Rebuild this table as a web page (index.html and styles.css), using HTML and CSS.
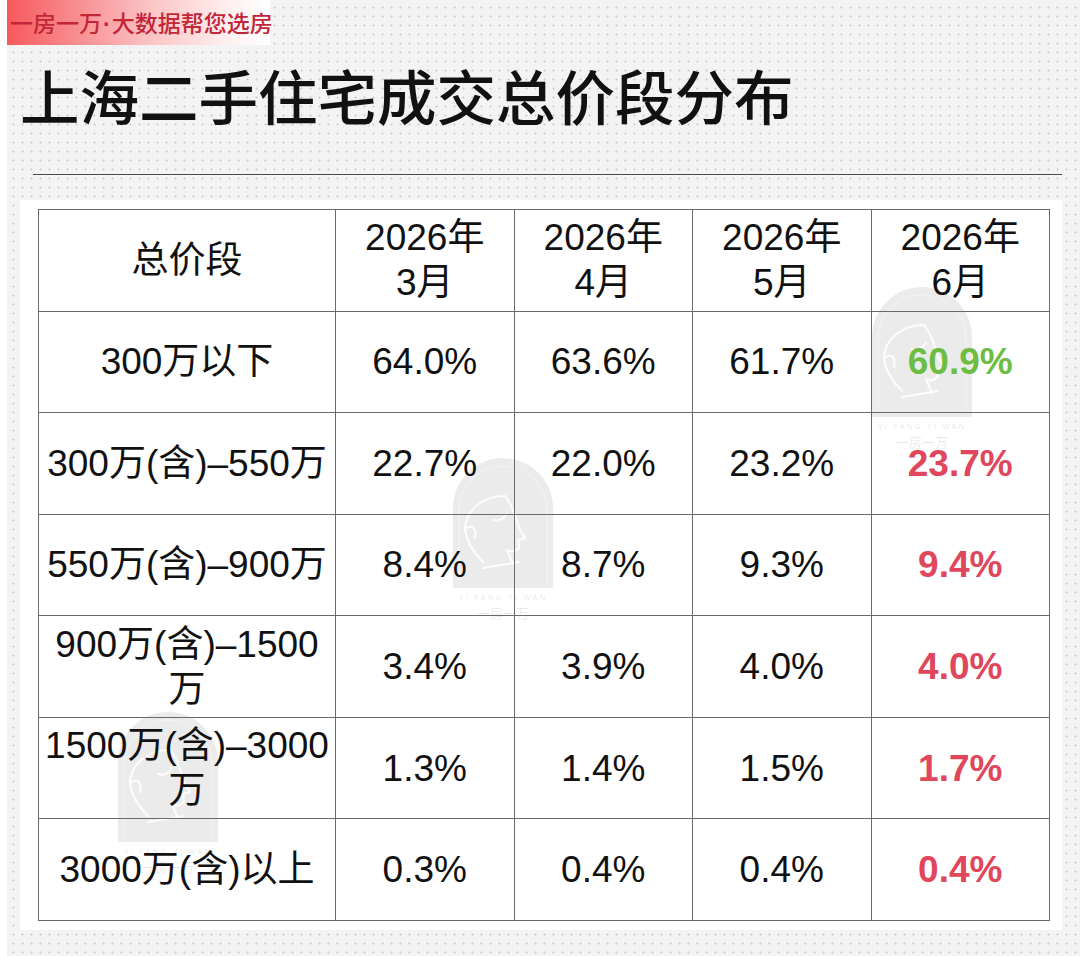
FILE: index.html
```html
<!DOCTYPE html>
<html lang="zh-CN">
<head>
<meta charset="utf-8">
<title>上海二手住宅成交总价段分布</title>
<link rel="stylesheet" href="styles.css">
</head>
<body>
<div class="page">
  <div class="badge">一房一万<span class="dot">·</span>大数据帮您选房</div>
  <h1 class="title">上海二手住宅成交总价段分布</h1>
  <div class="rule"></div>
  <div class="panel">
    <div class="wm wm1">
      <svg width="100" height="165" viewBox="0 0 100 165">
        <path class="arch" d="M0,130 V50 A50,50 0 0 1 100,50 V130 Z"/>
        <path class="inner" d="M6,126 V52 A44,44 0 0 1 94,52 V126"/>
        <path class="face" d="M12,72 C12,52 30,38 52,38 C58,44 62,56 66,70 L72,80 L65,82 L66,90 C62,94 58,94 54,92 L60,106 M12,72 C14,86 22,96 30,104 M14,70 C20,66 24,72 22,80 M30,110 L66,104 M54,56 C50,62 46,64 40,62"/>
        <text class="en" x="50" y="142">YI FANG YI WAN</text>
        <text class="cn" x="50" y="160">一房一万</text>
      </svg>
    </div>
    <div class="wm wm2">
      <svg width="100" height="165" viewBox="0 0 100 165">
        <path class="arch" d="M0,130 V50 A50,50 0 0 1 100,50 V130 Z"/>
        <path class="inner" d="M6,126 V52 A44,44 0 0 1 94,52 V126"/>
        <path class="face" d="M12,72 C12,52 30,38 52,38 C58,44 62,56 66,70 L72,80 L65,82 L66,90 C62,94 58,94 54,92 L60,106 M12,72 C14,86 22,96 30,104 M14,70 C20,66 24,72 22,80 M30,110 L66,104 M54,56 C50,62 46,64 40,62"/>
        <text class="en" x="50" y="142">YI FANG YI WAN</text>
        <text class="cn" x="50" y="160">一房一万</text>
      </svg>
    </div>
    <div class="wm wm3">
      <svg width="100" height="165" viewBox="0 0 100 165">
        <path class="arch" d="M0,130 V50 A50,50 0 0 1 100,50 V130 Z"/>
        <path class="inner" d="M6,126 V52 A44,44 0 0 1 94,52 V126"/>
        <path class="face" d="M12,72 C12,52 30,38 52,38 C58,44 62,56 66,70 L72,80 L65,82 L66,90 C62,94 58,94 54,92 L60,106 M12,72 C14,86 22,96 30,104 M14,70 C20,66 24,72 22,80 M30,110 L66,104 M54,56 C50,62 46,64 40,62"/>
        <text class="en" x="50" y="142">YI FANG YI WAN</text>
        <text class="cn" x="50" y="160">一房一万</text>
      </svg>
    </div>
    <table class="grid">
      <colgroup>
        <col class="c-first">
        <col class="c-val"><col class="c-val"><col class="c-val"><col class="c-val">
      </colgroup>
      <tr>
        <td>总价段</td>
        <td>2026年<br>3月</td>
        <td>2026年<br>4月</td>
        <td>2026年<br>5月</td>
        <td>2026年<br>6月</td>
      </tr>
      <tr>
        <td>300万以下</td>
        <td>64.0%</td><td>63.6%</td><td>61.7%</td><td class="up">60.9%</td>
      </tr>
      <tr>
        <td>300万(含)–550万</td>
        <td>22.7%</td><td>22.0%</td><td>23.2%</td><td class="down">23.7%</td>
      </tr>
      <tr>
        <td>550万(含)–900万</td>
        <td>8.4%</td><td>8.7%</td><td>9.3%</td><td class="down">9.4%</td>
      </tr>
      <tr>
        <td>900万(含)–1500万</td>
        <td>3.4%</td><td>3.9%</td><td>4.0%</td><td class="down">4.0%</td>
      </tr>
      <tr>
        <td>1500万(含)–3000万</td>
        <td>1.3%</td><td>1.4%</td><td>1.5%</td><td class="down">1.7%</td>
      </tr>
      <tr>
        <td>3000万(含)以上</td>
        <td>0.3%</td><td>0.4%</td><td>0.4%</td><td class="down">0.4%</td>
      </tr>
    </table>
  </div>
</div>
</body>
</html>
```

FILE: styles.css
```css
html, body {
  margin: 0;
  padding: 0;
  background: #ffffff;
}

body {
  font-family: "Liberation Sans", "Noto Sans CJK SC", sans-serif;
  color: #111111;
}

.page {
  margin-left: 7px;
  width: 1073px;
  height: 956px;
  overflow: hidden;
  background-color: #f3f3f3;
  background-image: radial-gradient(circle, #c8c8c8 0.75px, transparent 1.25px);
  background-size: 9px 9px;
  background-position: 2px 3px;
  display: flex;
  flex-direction: column;
}

.badge {
  margin-left: -3px;
  width: 260px;
  height: 45px;
  padding-left: 6px;
  line-height: 45px;
  font-family: "Noto Sans CJK SC", sans-serif;
  font-weight: 500;
  font-size: 23px;
  color: #c42639;
  background: linear-gradient(90deg, #f65659 0%, #f8898c 25%, #fbc4c5 55%, #fef0f0 85%, #ffffff 100%);
  white-space: nowrap;
}

.dot {
  font-family: "Liberation Sans", sans-serif;
  font-weight: 700;
  margin: 0 1px;
}

.title {
  margin: 14px 0 0 0;
  padding-left: 13px;
  height: 70px;
  line-height: 70px;
  font-family: "Noto Sans CJK SC", sans-serif;
  font-weight: 500;
  font-size: 59.5px;
  color: #111111;
  white-space: nowrap;
}

.rule {
  margin: 45px 0 0 26px;
  width: 1029px;
  height: 1px;
  background: #4a4a4a;
}

.panel {
  position: relative;
  margin: 25px 0 0 13px;
  width: 1042px;
  height: 730px;
  box-sizing: border-box;
  padding: 9px 13px 10px 18px;
  background: #ffffff;
}

.wm {
  position: absolute;
  z-index: 0;
  width: 100px;
  height: 165px;
  pointer-events: none;
}

.wm svg {
  display: block;
}

.wm1 { left: 852px; top: 87px; }
.wm2 { left: 433px; top: 258px; }
.wm3 { left: 98px; top: 512px; }

.arch {
  fill: rgba(0, 0, 0, 0.08);
}

.inner {
  fill: none;
  stroke: rgba(255, 255, 255, 0.35);
  stroke-width: 1.2;
}

.face {
  fill: none;
  stroke: rgba(255, 255, 255, 0.85);
  stroke-width: 2.2;
  stroke-linecap: round;
  stroke-linejoin: round;
}

.en {
  font-family: "Liberation Sans", sans-serif;
  font-size: 7.5px;
  letter-spacing: 2.2px;
  text-anchor: middle;
  fill: rgba(0, 0, 0, 0.12);
}

.cn {
  font-family: "Noto Sans CJK SC", sans-serif;
  font-size: 13px;
  text-anchor: middle;
  fill: rgba(0, 0, 0, 0.1);
}

.grid {
  position: relative;
  z-index: 1;
  width: 1011px;
  height: 711px;
  border-collapse: collapse;
  table-layout: fixed;
  background: transparent;
}

.c-first { width: 297px; }
.c-val { width: 178.5px; }

.grid tr {
  height: 101.57px;
}

.grid td {
  border: 1px solid #6a6a6a;
  padding: 0 6px;
  text-align: center;
  vertical-align: middle;
  font-size: 37px;
  line-height: 45px;
  color: #111111;
}

.grid td.up {
  color: #6cbd42;
  font-weight: 700;
}

.grid td.down {
  color: #e0465c;
  font-weight: 700;
}
```
